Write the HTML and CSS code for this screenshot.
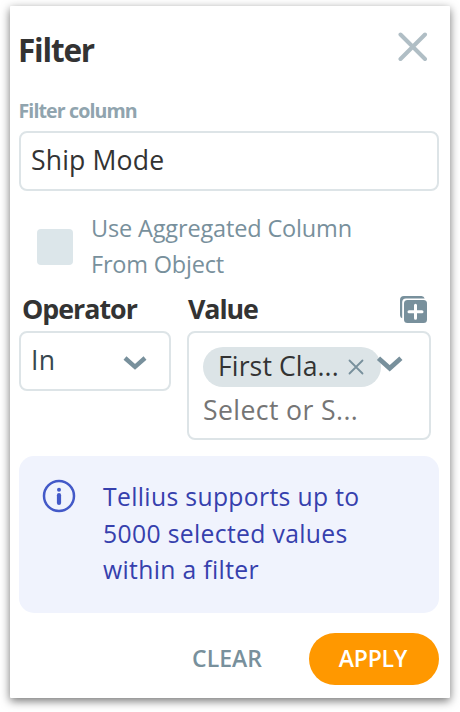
FILE: index.html
```html
<!DOCTYPE html>
<html lang="en">
<head>
<meta charset="utf-8">
<title>Filter</title>
<link rel="stylesheet" href="styles.css">
</head>
<body>
<main class="panel">
  <header class="header">
    <h1 class="title">Filter</h1>
    <svg class="close" width="30" height="30" viewBox="0 0 30 30"><path d="M2.5 2.5 27 27M27 2.5 2.5 27"/></svg>
  </header>
  <div class="label">Filter column</div>
  <div class="box column-input">Ship Mode</div>
  <div class="aggregate">
    <span class="checkbox"></span>
    <div class="aggregate-text">Use Aggregated Column<br><span class="tight">From Object</span></div>
  </div>
  <section class="fields">
    <div class="operator">
      <div class="field-head"><h2 class="heading">Operator</h2></div>
      <div class="box operator-select">
        <span class="operator-value">In</span>
        <svg class="chevron" width="24" height="16" viewBox="0 0 24 16"><path d="m2 3 10 8.8L22 3"/></svg>
      </div>
    </div>
    <div class="value">
      <div class="field-head">
        <h2 class="heading heading-value">Value</h2>
        <svg class="add" width="28" height="28" viewBox="0 0 28 28">
          <path class="solid" d="M4 0h17.5a3.5 3.5 0 0 1 3.2 2.5H6a3.800 3.800 0 0 0-3.800 3.800v16A3.500 3.500 0 0 1 0 19V4A4 4 0 0 1 4 0z"/>
          <rect class="solid" x="4" y="4" width="23" height="23" rx="3.5"/>
          <path class="plus" d="M15.5 9.200v13M9 15.700h13"/>
        </svg>
      </div>
      <div class="box value-select">
        <div class="value-row">
          <span class="chip"><span class="chip-text">First Cla...</span><svg class="remove" width="16" height="16" viewBox="0 0 16 16"><path d="m1.500 1.500 13 13M14.500 1.500l-13 13"/></svg></span>
          <svg class="chevron chip-chevron" width="28" height="18" viewBox="0 0 28 18"><path d="m2.500 3.300 11.200 9.900 11.200-9.900"/></svg>
        </div>
        <div class="placeholder">Select or S...</div>
      </div>
    </div>
  </section>
  <section class="notice">
    <svg class="info" width="34" height="34" viewBox="0 0 34 34"><circle cx="17" cy="17" r="15"/><circle class="dot" cx="17" cy="10.800" r="2"/><path d="M17 16.200v7.800"/></svg>
    <p class="notice-text">Tellius supports up to<br>5000 selected values<br>within a filter</p>
  </section>
  <footer class="actions">
    <button class="button clear">CLEAR</button>
    <button class="button apply">APPLY</button>
  </footer>
</main>
</body>
</html>
```
FILE: styles.css
```css
* { box-sizing: border-box; }

body {
  margin: 0;
  padding: 6px 10px 14px;
  background: #fff;
  font-family: "Open Sans", sans-serif;
}

h1, h2, p { margin: 0; }
svg { display: block; flex: none; fill: none; stroke-linecap: round; }

.panel {
  width: 440px;
  height: 692px;
  padding: 18px 11px 13px 9px;
  background: #fff;
  border-radius: 1px;
  box-shadow: 0 3px 10px rgba(0, 0, 0, .55);
}

.header {
  display: flex;
  justify-content: space-between;
  height: 70px;
  padding-right: 11px;
}

.title {
  margin-left: -1px;
  font-size: 31.5px;
  line-height: 51px;
  font-weight: 700;
  letter-spacing: -1.2px;
  color: #333;
}

.close { margin-top: 8px; stroke: #b0bec5; stroke-width: 4; }

.label {
  height: 37px;
  margin-left: -.5px;
  font-size: 19.6px;
  line-height: 34px;
  font-weight: 700;
  letter-spacing: -.9px;
  color: #90a4ae;
}

.box {
  border: 2px solid #dde4e7;
  border-radius: 8px;
  background: #fff;
}

.column-input {
  height: 60px;
  padding-left: 10px;
  font-size: 26.6px;
  line-height: 55px;
  letter-spacing: .15px;
  color: #333;
}

.aggregate {
  display: flex;
  height: 102px;
  padding: 19px 0 0 18px;
  gap: 18px;
}

.checkbox {
  width: 36px;
  height: 36px;
  margin-top: 19px;
  border-radius: 4px;
  background: #dce6ea;
}

.aggregate-text {
  font-size: 23.5px;
  line-height: 36px;
  letter-spacing: -.15px;
  color: #78909c;
  white-space: nowrap;
}

.tight { letter-spacing: -.2px; }

.fields { display: flex; gap: 16px; height: 163px; }
.operator { width: 152px; }
.value { width: 244px; }

.field-head {
  display: flex;
  height: 38px;
  padding: 0 3px;
  justify-content: space-between;
}

.value .field-head { padding-left: 1px; }

.heading {
  font-size: 26.8px;
  line-height: 32px;
  font-weight: 700;
  letter-spacing: -1px;
  color: #333;
}

.heading-value { letter-spacing: -1.1px; }
.add { margin-top: 3px; }
.solid { fill: #78909c; }
.plus { stroke: #fff; stroke-width: 3; }

.operator-select {
  display: flex;
  height: 60px;
  padding: 0 22px 0 10px;
  justify-content: space-between;
  font-size: 26.6px;
  line-height: 55px;
  color: #37474f;
}

.operator-value { letter-spacing: .3px; }
.chevron { stroke: #78909c; stroke-width: 4.4; stroke-linecap: butt; }
.operator-select .chevron { margin-top: 22px; }

.value-select {
  height: 109px;
  padding: 14px 0 0 14px;
  font-size: 26.6px;
}

.value-row { display: flex; height: 40px; }

.chip {
  display: flex;
  width: 178px;
  height: 40px;
  padding-left: 15px;
  border-radius: 20px;
  background: #dce4e7;
  color: #333;
}

.chip-text {
  width: 130px;
  line-height: 39px;
  letter-spacing: .1px;
}

.remove { margin-top: 12px; stroke: #78909c; stroke-width: 1.8; }
.chip-chevron { margin: 8px 0 0 -5px; stroke-width: 4.8; }

.placeholder {
  line-height: 46px;
  letter-spacing: .4px;
  color: #757575;
}

.notice {
  display: flex;
  height: 157px;
  padding: 22px 0 0 23px;
  gap: 27px;
  border-radius: 15px;
  background: #f0f3fd;
}

.info { margin: 1px 0 0 -.5px; stroke: #4359c8; stroke-width: 2.5; }
.info path { stroke-width: 4.2; }
.info .dot { fill: #4359c8; stroke: none; }

.notice-text {
  padding: 1px 0 0 .5px;
  font-size: 24.7px;
  line-height: 36.5px;
  letter-spacing: .35px;
  color: #3640ad;
  white-space: nowrap;
}

.actions {
  display: flex;
  justify-content: flex-end;
  gap: 46px;
  margin-top: 20px;
}

.button {
  height: 52px;
  padding: 0 0 1px;
  border: 0;
  border-radius: 26px;
  background: none;
  font: 600 23px/51px "Open Sans", sans-serif;
}

.clear { color: #78909c; width: 72px; }
.apply { width: 130px; padding-right: 2px; background: #ff9800; color: #fff; letter-spacing: -.2px; }
```
